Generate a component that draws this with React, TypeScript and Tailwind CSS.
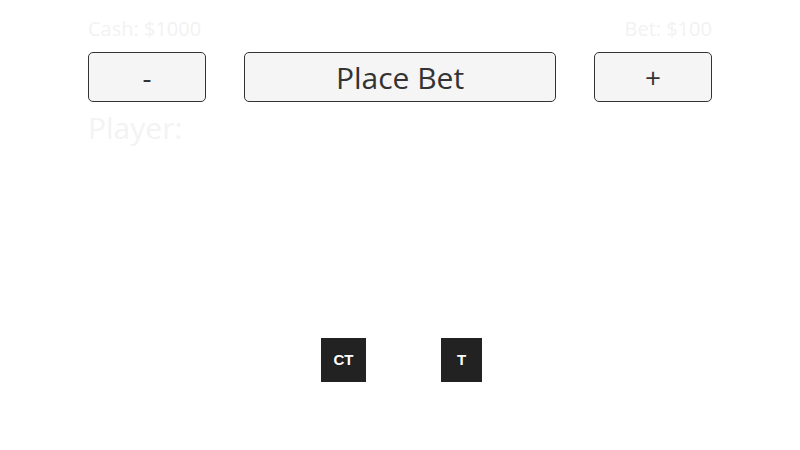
export default function App() {
  return (
    <div className="h-[450px] w-[800px] bg-white font-['Open_Sans',sans-serif]">
      <div className="mx-auto w-[624px] pt-[15px]">
        <div className="flex h-[28px] items-center justify-between text-[20px] text-[#f2f2f2]">
          <span>Cash: $1000</span>
          <span>Bet: $100</span>
        </div>
        <div className="mt-[9px] flex gap-[38px]">
          <button className="h-[50px] w-[118px] rounded-[5px] border border-[#333] bg-[#f5f5f5] text-[28px] text-[#333]">
            -
          </button>
          <button className="h-[50px] flex-1 rounded-[5px] border border-[#333] bg-[#f5f5f5] text-[30px] text-[#333]">
            Place Bet
          </button>
          <button className="h-[50px] w-[118px] rounded-[5px] border border-[#333] bg-[#f5f5f5] text-[28px] text-[#333]">
            +
          </button>
        </div>
        <div className="mt-[4px] text-[30px] leading-[44px] text-[#f3f3f3]">Player:</div>
      </div>
      <div className="mt-[188px] flex justify-center gap-[75px] pl-[3px] font-['Liberation_Sans',sans-serif] text-[15px] font-bold text-white">
        <div className="flex h-[44px] w-[45px] items-center justify-center bg-[#222]">CT</div>
        <div className="flex h-[44px] w-[41px] items-center justify-center bg-[#222]">T</div>
      </div>
    </div>
  );
}
